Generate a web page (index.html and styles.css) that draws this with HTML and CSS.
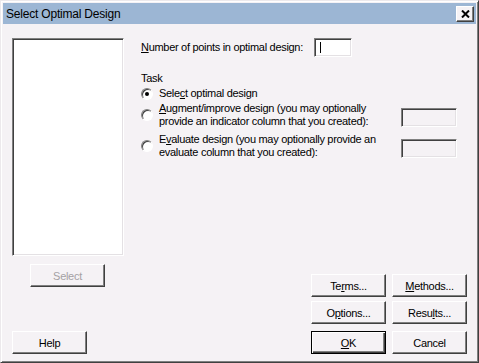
FILE: index.html
```html
<!DOCTYPE html>
<html lang="en">
<head>
    <meta charset="UTF-8">
    <title>Select Optimal Design</title>
    <link rel="stylesheet" href="styles.css">
</head>
<body>
    <div class="dialog">
        <div class="titlebar">
            <span class="title">Select Optimal Design</span>
            <button class="close">
                <svg width="9" height="8" viewBox="0 0 9 8"><path d="M1 0.5 L8 7.5 M8 0.5 L1 7.5" stroke="#000" stroke-width="2"/></svg>
            </button>
        </div>

        <div class="content">
            <div class="left">
                <div class="listbox"></div>
                <button class="btn select" disabled>Select</button>
                <button class="btn help">Help</button>
            </div>

            <div class="right">
                <div class="points">
                    <label class="points-label"><u>N</u>umber of points in optimal design:</label>
                    <div class="field"><span class="caret"></span></div>
                </div>

                <div class="task">
                    <div class="task-title">Task</div>
                    <div class="option first">
                        <span class="radio checked"></span>
                        <span class="opt-text">Sele<u>c</u>t optimal design</span>
                    </div>
                    <div class="option">
                        <span class="radio"></span>
                        <span class="opt-text"><u>A</u>ugment/improve design (you may optionally<br>provide an indicator column that you created):</span>
                        <span class="field off"></span>
                    </div>
                    <div class="option">
                        <span class="radio"></span>
                        <span class="opt-text">E<u>v</u>aluate design (you may optionally provide an<br>evaluate column that you created):</span>
                        <span class="field off"></span>
                    </div>
                </div>

                <div class="buttons">
                    <button class="btn">Te<u>r</u>ms...</button>
                    <button class="btn"><u>M</u>ethods...</button>
                    <button class="btn">O<u>p</u>tions...</button>
                    <button class="btn">Resu<u>l</u>ts...</button>
                    <button class="btn ok"><u>O</u>K</button>
                    <button class="btn cancel">Cancel</button>
                </div>
            </div>
        </div>
    </div>
</body>
</html>
```

FILE: styles.css
```css
body {
    margin: 0;
    background: #f5f2f5;
    font-family: "Liberation Sans", Arial, sans-serif;
    font-size: 11px;
    letter-spacing: -0.3px;
    color: #000;
}
.dialog {
    width: 479px;
    height: 363px;
    box-sizing: border-box;
    display: flex;
    flex-direction: column;
    padding: 2px;
    background: #f5f2f5;
    border: 1px solid;
    border-color: #ece9ec #404040 #404040 #ece9ec;
    box-shadow: inset 1px 1px #fff, inset -1px -1px #808080;
}
.titlebar {
    height: 21px;
    display: flex;
    align-items: center;
    justify-content: space-between;
    background: #9cb6d4;
    padding: 0 2px 0 3px;
}
.title {
    font-size: 12px;
    letter-spacing: -0.2px;
    color: #000;
}
.close {
    width: 18px;
    height: 16px;
    padding: 0;
    display: flex;
    align-items: center;
    justify-content: center;
    background: #f5f2f5;
    border: 1px solid;
    border-color: #fff #404040 #404040 #fff;
    box-shadow: inset -1px -1px #808080;
}
.content {
    flex: 1;
    display: flex;
    gap: 17px;
    padding: 14px 9px 6px 9px;
}
.left {
    width: 112px;
    display: flex;
    flex-direction: column;
}
.listbox {
    height: 218px;
    box-sizing: border-box;
    background: #fff;
    border: 1px solid;
    border-color: #808080 #fff #fff #808080;
    box-shadow: inset 1px 1px #404040, inset -1px -1px #e4e1e4;
}
.btn {
    width: 75px;
    height: 23px;
    padding: 0;
    box-sizing: border-box;
    font-family: inherit;
    font-size: 11px;
    letter-spacing: inherit;
    color: #000;
    background: #f5f2f5;
    border: 1px solid;
    border-color: #fff #404040 #404040 #fff;
    box-shadow: inset -1px -1px #808080;
}
.select {
    margin: 8px auto 0 18px;
    color: #a4a1a4;
}
.help {
    margin-top: auto;
}
.right {
    flex: 1;
    display: flex;
    flex-direction: column;
}
.points {
    display: flex;
    align-items: center;
}
.points-label {
    width: 173px;
    padding-bottom: 2px;
}
.field {
    width: 38px;
    height: 19px;
    box-sizing: border-box;
    background: #fff;
    border: 1px solid;
    border-color: #808080 #fff #fff #808080;
    box-shadow: inset 1px 1px #404040, inset -1px -1px #e4e1e4;
    padding: 3px 0 0 5px;
}
.caret {
    display: block;
    width: 1px;
    height: 11px;
    background: #000;
}
.field.off {
    width: 56px;
    background: #f5f2f5;
    margin: 4px 10px 0 auto;
}
.task {
    margin-top: 15px;
    line-height: 13px;
}
.task-title {
    margin-bottom: 2px;
}
.option {
    display: flex;
    align-items: center;
    gap: 6px;
    margin-top: 2px;
}
.option + .option + .option {
    margin-top: 5px;
}
.option.first {
    margin-top: 0;
}
.radio {
    width: 12px;
    height: 12px;
    box-sizing: border-box;
    border-radius: 50%;
    background: #fff;
    border: 1px solid;
    border-color: #808080 #fff #fff #808080;
    box-shadow: inset 1px 1px #404040;
    display: flex;
    align-items: center;
    justify-content: center;
}
.radio.checked::after {
    content: "";
    width: 4px;
    height: 4px;
    border-radius: 50%;
    background: #000;
}
.buttons {
    margin-top: auto;
    align-self: flex-end;
    display: grid;
    grid-template-columns: 75px 75px;
    column-gap: 6px;
    row-gap: 4px;
}
.ok,
.cancel {
    margin-top: 3px;
}
.ok {
    border: 1px solid #000;
    box-shadow: inset 1px 1px #fff, inset -1px -1px #404040, inset -2px -2px #808080;
}
```
